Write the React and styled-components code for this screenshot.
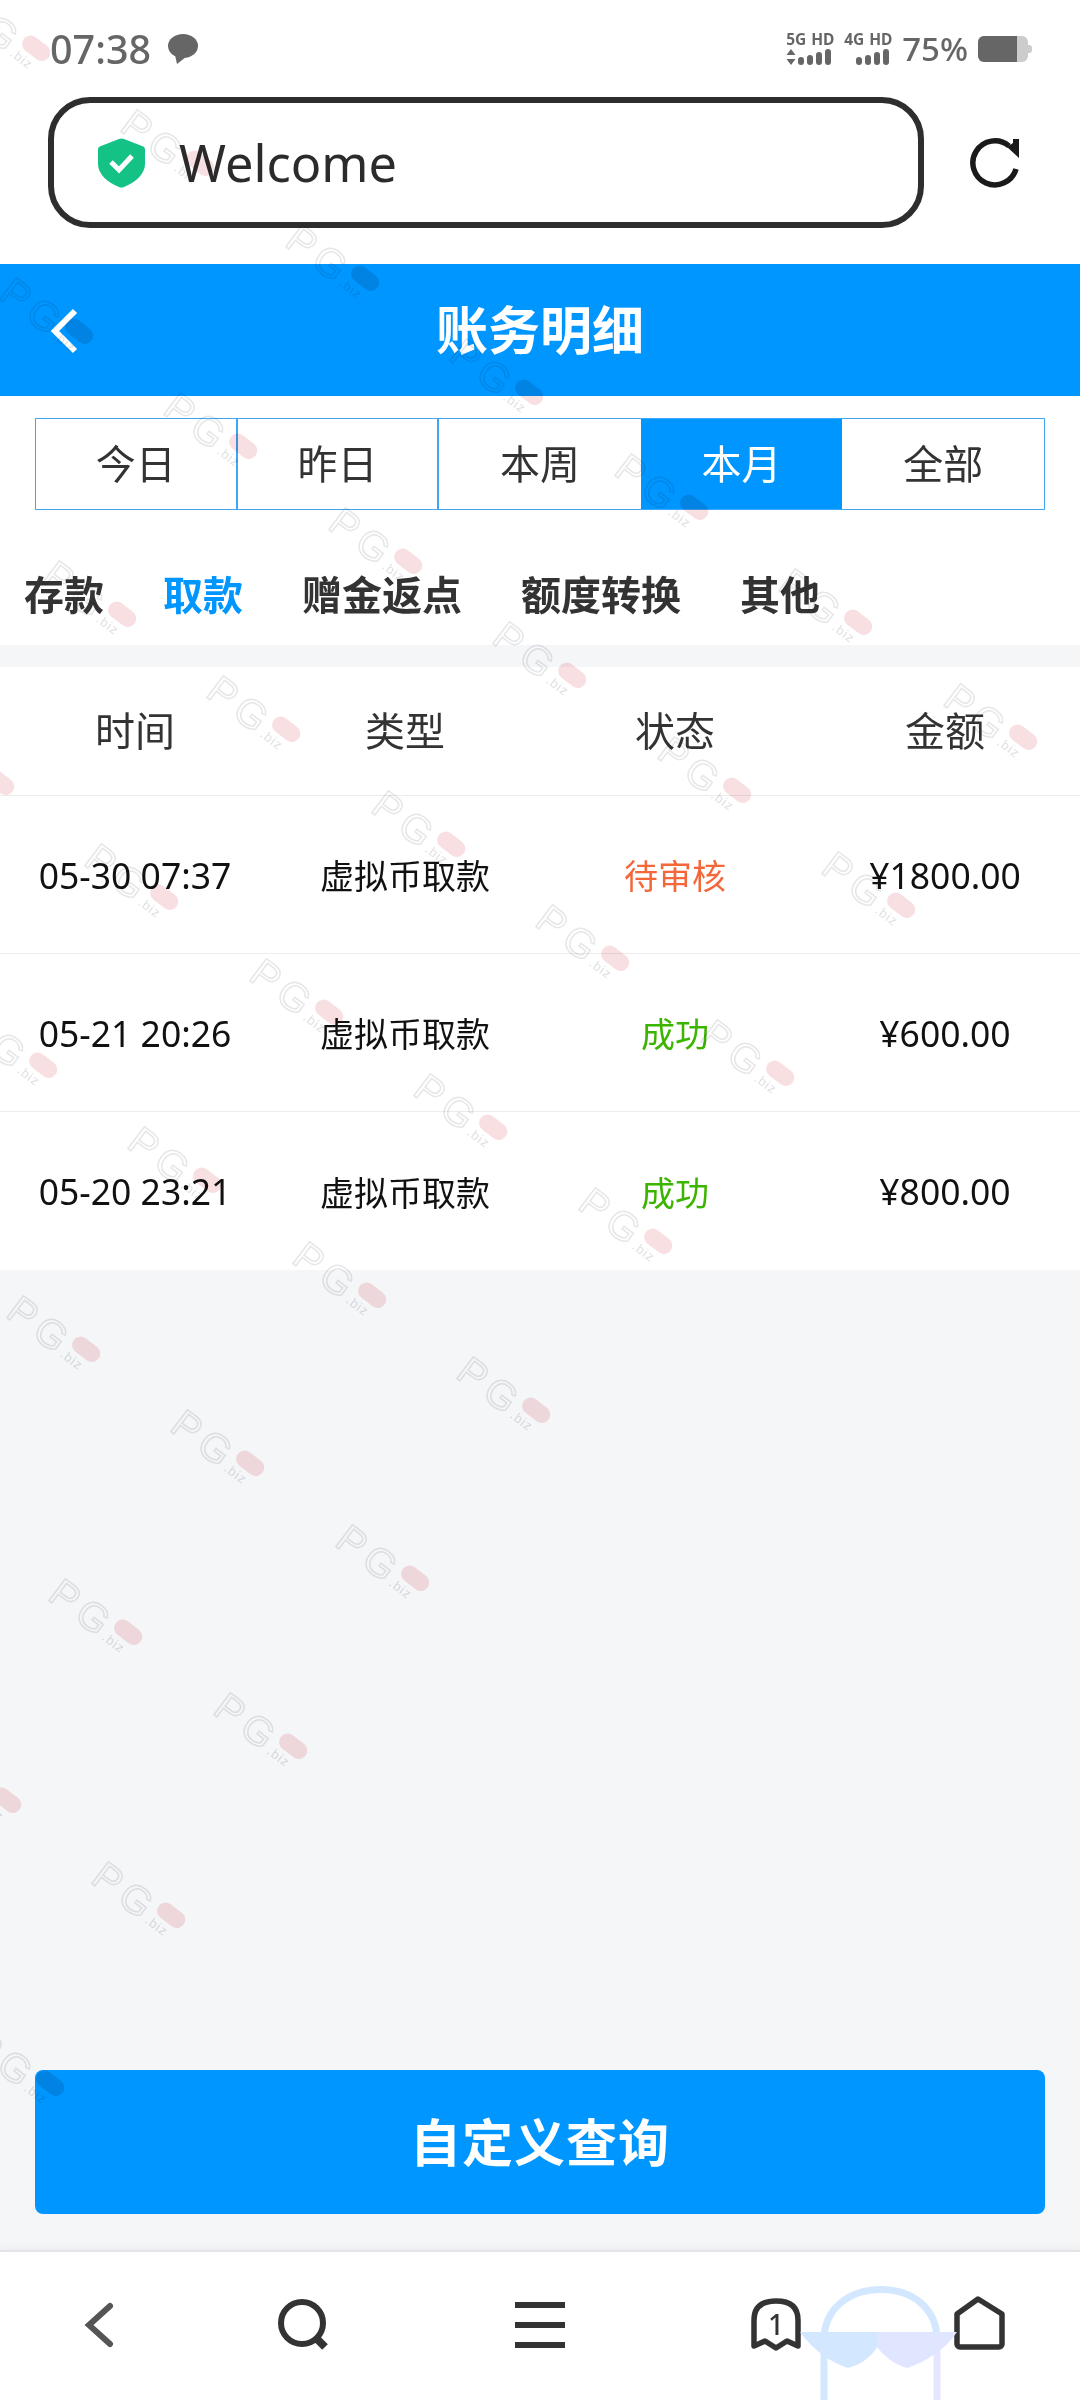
import React from 'react'
import styled, { createGlobalStyle } from 'styled-components'

const Global = createGlobalStyle`
html,body{margin:0;padding:0;background:#f4f6f8;}
*{box-sizing:border-box;}
body{font-family:"Noto Sans","Noto Sans CJK SC",sans-serif;}
`
const Page = styled.div`
position:relative;
width:1080px;
height:2400px;
overflow:hidden;
display:flex;
flex-direction:column;
background:#f4f6f8;
`
const Top = styled.div`
background:#fff;
height:264px;
display:flex;
flex-direction:column;
`
const StatusBar = styled.div`
height:97px;
padding:0 48px 0 50px;
display:flex;
justify-content:space-between;
align-items:center;
color:#666;
`
const TimeWrap = styled.div`
display:flex;
align-items:center;
gap:17px;
font-size:39.5px;
font-weight:500;
`
const StatusRight = styled.div`
display:flex;
align-items:center;
gap:10px;
`
const NetBlock = styled.div`
width:48px;
display:flex;
flex-direction:column;
gap:3px;
font-size:15.5px;
font-weight:700;
line-height:14px;
word-spacing:1px;
white-space:nowrap;
`
const Percent = styled.span`
font-size:33px;
font-weight:500;
`
const AddressRow = styled.div`
display:flex;
align-items:center;
padding-left:48px;
`
const Address = styled.div`
width:876px;
height:131px;
border:6px solid #2e2e2e;
border-radius:42px;
display:flex;
align-items:center;
padding-left:44px;
gap:34px;
font-size:50.5px;
color:#2b2b2b;
`
const Refresh = styled.div`
margin-left:46px;
display:flex;
`
const Header = styled.div`
height:132px;
padding-bottom:5px;
background:#0096ff;
display:flex;
align-items:center;
justify-content:center;
position:relative;
color:#fff;
font-size:52px;
font-weight:700;
`
const BackBtn = styled.div`
position:absolute;
left:50px;
top:44px;
display:flex;
`
const RangeWrap = styled.div`
background:#fff;
padding:22px 35px 0;
`
const Range = styled.div`
display:grid;
grid-template-columns:repeat(5,1fr);
height:92px;
border:1px solid #3fa6f5;
`
const RangeItem = styled.div`
display:flex;
align-items:center;
justify-content:center;
padding-bottom:4px;
font-size:40px;
color:${p => p.$on ? '#fff' : '#333'};
background:${p => p.$on ? '#0096ff' : 'transparent'};
border-right:${p => p.$line ? '2px solid #3fa6f5' : 'none'};
`
const SubTabs = styled.div`
background:#fff;
height:135px;
padding:30px 24px 0;
display:flex;
align-items:center;
gap:59px;
`
const SubTab = styled.div`
font-size:40px;
font-weight:700;
color:${p => p.$on ? '#0096ff' : '#333'};
`
const Table = styled.div`
margin-top:22px;
background:#fff;
`
const Row = styled.div`
display:grid;
grid-template-columns:repeat(4,1fr);
height:${p => p.$head ? 129 : 158}px;
padding-bottom:${p => p.$head ? 4 : 0}px;
border-bottom:1px solid #ececec;
font-size:${p => p.$head ? 40 : 34}px;
color:${p => p.$head ? '#333' : '#111'};
&:last-child{border-bottom:none;}
`
const Cell = styled.div`
display:flex;
align-items:center;
justify-content:center;
white-space:nowrap;
font-size:${p => p.$num ? '35.5px' : 'inherit'};
color:${p => p.$color || 'inherit'};
`
const Spacer = styled.div`
flex:1;
display:flex;
flex-direction:column;
justify-content:flex-end;
padding:0 35px 36px;
`
const QueryBtn = styled.div`
height:144px;
padding-bottom:4px;
border-radius:8px;
background:#0096ff;
color:#fff;
font-size:51px;
font-weight:700;
display:flex;
align-items:center;
justify-content:center;
letter-spacing:1px;
`
const Nav = styled.div`
height:150px;
background:#fff;
border-top:2px solid #e2e4e7;
box-shadow:0 -4px 6px rgba(0,0,0,.03);
display:grid;
grid-template-columns:200px 208px 264px 208px 200px;
padding-top:44px;
`
const NavItem = styled.div`
display:flex;
justify-content:center;
align-items:flex-start;
`
const Marks = styled.div`
position:absolute;
left:0;
top:0;
width:1080px;
height:2400px;
pointer-events:none;
overflow:hidden;
`
const Mark = styled.div`
position:absolute;
width:0;
height:0;
transform:rotate(37deg);
transform-origin:0 0;
mix-blend-mode:multiply;
`
const MarkText = styled.span`
position:absolute;
left:6px;
top:-22px;
font-family:"Liberation Sans",sans-serif;
font-size:40px;
line-height:44px;
letter-spacing:6px;
color:transparent;
-webkit-text-stroke:1.5px #e6e7e9;
`
const MarkPill = styled.i`
position:absolute;
left:76px;
top:-17px;
width:31px;
height:17px;
border-radius:9px;
background:#f8dfe2;
`
const MarkBiz = styled.span`
position:absolute;
left:74px;
top:2px;
font-family:"Liberation Sans",sans-serif;
font-size:13px;
line-height:14px;
letter-spacing:1px;
color:#e0e1e3;
`
const Buddy = styled.svg`
position:absolute;
left:795px;
top:2280px;
pointer-events:none;
`

// watermark lattice, rows of the diagonal repeat that is visible on the page
const lattice = [
  [0, [-1, 0, 1, 2, 3, 4, 5]],
  [1, [-1, 0, 1, 2, 3, 4]],
  [2, [-1, 0, 1, 2, 3]],
  [3, [-2, -1, 0, 1, 2]],
  [4, [-2, -1, 0, 1]],
  [5, [-2, -1, 0]],
  [6, [-2, -1]],
  [7, [-3, -2]],
  [8, [-3]],
]
const markList = []
lattice.forEach(([i, js]) => js.forEach(j => {
  markList.push({
    x: (80 + 28 * i + 107.5 * j) * 1.53,
    y: (75 + 185 * i + 75 * j) * 1.53,
  })
}))

const ranges = ['今日', '昨日', '本周', '本月', '全部']
const subTabs = ['存款', '取款', '赠金返点', '额度转换', '其他']
const rows = [
  ['05-30 07:37', '虚拟币取款', '待审核', '¥1800.00', '#f4673a'],
  ['05-21 20:26', '虚拟币取款', '成功', '¥600.00', '#3cb500'],
  ['05-20 23:21', '虚拟币取款', '成功', '¥800.00', '#3cb500'],
]

const Signal = ({ arrows }) => (
  <svg width="48" height="16" viewBox="0 0 48 16">
    {arrows && <path d="M5 0l4.500 6h-9zM5 16l-4.500-6h9z" fill="#666" />}
    <rect x="12" y="8" width="6" height="8" rx="3" fill="#666" />
    <rect x="21" y="6" width="6" height="10" rx="3" fill="#666" />
    <rect x="30" y="3" width="6" height="13" rx="3" fill="#666" />
    <rect x="39" y="0" width="6" height="16" rx="3" fill="#666" />
  </svg>
)

const App = () => {
  return (
    <Page>
      <Global />
      <Top>
        <StatusBar>
          <TimeWrap>
            07:38
            <svg width="30" height="30" viewBox="0 0 30 30">
              <ellipse cx="15" cy="12" rx="15" ry="12" fill="#666" />
              <path d="M7 21l2 9 9-7z" fill="#666" />
            </svg>
          </TimeWrap>
          <StatusRight>
            <NetBlock>5G HD<Signal arrows /></NetBlock>
            <NetBlock>4G HD<Signal /></NetBlock>
            <Percent>75%</Percent>
            <svg width="54" height="28" viewBox="0 0 54 28">
              <path d="M6 1h38a6 6 0 0 1 6 6v3h1a3 3 0 0 1 3 3v2a3 3 0 0 1-3 3h-1v3a6 6 0 0 1-6 6H6a6 6 0 0 1-6-6V7a6 6 0 0 1 6-6z" fill="#ccc" />
              <path d="M6 1h33v26H6a6 6 0 0 1-6-6V7a6 6 0 0 1 6-6z" fill="#666" />
            </svg>
          </StatusRight>
        </StatusBar>
        <AddressRow>
          <Address>
            <svg width="47" height="50" viewBox="0 0 47 50">
              <path d="M21 1L3 8a4 4 0 0 0-3 4v14c0 10 9 18 21 23a6 6 0 0 0 5 0c12-5 21-13 21-23V12a4 4 0 0 0-3-4L26 1a6 6 0 0 0-5 0z" fill="#14c285" />
              <path d="M13 24l8 8 13-14" fill="none" stroke="#fff" strokeWidth="5" />
            </svg>
            Welcome
          </Address>
          <Refresh>
            <svg width="50" height="50" viewBox="0 0 50 50">
              <path d="M46 31A22 22 0 1 1 39 8" fill="none" stroke="#1a1a1a" strokeWidth="5.500" />
              <path d="M49 1V20L37 9l6-4V1z" fill="#1a1a1a" />
            </svg>
          </Refresh>
        </AddressRow>
      </Top>
      <Header>
        <BackBtn>
          <svg width="30" height="46" viewBox="0 0 30 46">
            <path d="M25 3L5 23l20 20" fill="none" stroke="#fff" strokeWidth="6" />
          </svg>
        </BackBtn>
        账务明细
      </Header>
      <RangeWrap>
        <Range>
          {ranges.map((r, i) => (
            <RangeItem key={r} $on={i === 3} $line={i < 2}>{r}</RangeItem>
          ))}
        </Range>
      </RangeWrap>
      <SubTabs>
        {subTabs.map((t, i) => <SubTab key={t} $on={i === 1}>{t}</SubTab>)}
      </SubTabs>
      <Table>
        <Row $head>
          <Cell>时间</Cell>
          <Cell>类型</Cell>
          <Cell>状态</Cell>
          <Cell>金额</Cell>
        </Row>
        {rows.map(r => (
          <Row key={r[0]}>
            <Cell $num>{r[0]}</Cell>
            <Cell>{r[1]}</Cell>
            <Cell $color={r[4]}>{r[2]}</Cell>
            <Cell $num>{r[3]}</Cell>
          </Row>
        ))}
      </Table>
      <Spacer>
        <QueryBtn>自定义查询</QueryBtn>
      </Spacer>
      <Nav>
        <NavItem>
          <svg width="36" height="56" viewBox="0 0 36 56">
            <path d="M28 10L7 29l21 19" fill="none" stroke="#555" strokeWidth="6" strokeLinecap="round" />
          </svg>
        </NavItem>
        <NavItem>
          <svg width="60" height="60" viewBox="0 0 60 60">
            <circle cx="28" cy="27" r="21" fill="none" stroke="#333" strokeWidth="6" />
            <path d="M43 43l8 8" fill="none" stroke="#333" strokeWidth="8" />
          </svg>
        </NavItem>
        <NavItem>
          <svg width="50" height="56" viewBox="0 0 50 56">
            <path d="M0 9h50M0 29h50M0 49h50" fill="none" stroke="#333" strokeWidth="6" />
          </svg>
        </NavItem>
        <NavItem>
          <svg width="52" height="56" viewBox="0 0 52 56">
            <path d="M4 50V24C4 11 12 5 26 5s22 6 22 19v26l-11-5-11 7-11-7z" fill="none" stroke="#333" strokeWidth="5.500" strokeLinejoin="round" />
            <text x="26" y="39" textAnchor="middle" fontSize="28" fontWeight="500" fill="#333" fontFamily="Noto Sans, sans-serif">1</text>
          </svg>
        </NavItem>
        <NavItem>
          <svg width="56" height="56" viewBox="0 0 56 56">
            <path d="M26 3l24 15v30a3 3 0 0 1-3 3H8a3 3 0 0 1-3-3V18z" fill="none" stroke="#333" strokeWidth="5.500" strokeLinejoin="round" />
          </svg>
        </NavItem>
      </Nav>
      <Buddy width="167" height="120" viewBox="0 0 167 120">
        <path d="M29 120V60C29 28 55 9.500 86 9.500S142 28 142 60" fill="none" stroke="#d3e8ff" strokeWidth="7" />
        <path d="M142 60v60" fill="none" stroke="#e4e6ff" strokeWidth="7" />
        <path d="M5 52h77v15C78 75 68 84 53 88 35 82 18 70 5 52z" fill="#d3e8ff" />
        <path d="M82 52h80c-12 18-32 30-50 36-14-4-24-13-30-21z" fill="#e0e6ff" />
      </Buddy>
      <Marks>
        {markList.map((m, i) => (
          <Mark key={i} style={{ left: m.x, top: m.y }}>
            <MarkText>PG</MarkText>
            <MarkPill />
            <MarkBiz>.biz</MarkBiz>
          </Mark>
        ))}
      </Marks>
    </Page>
  )
}
export default App
